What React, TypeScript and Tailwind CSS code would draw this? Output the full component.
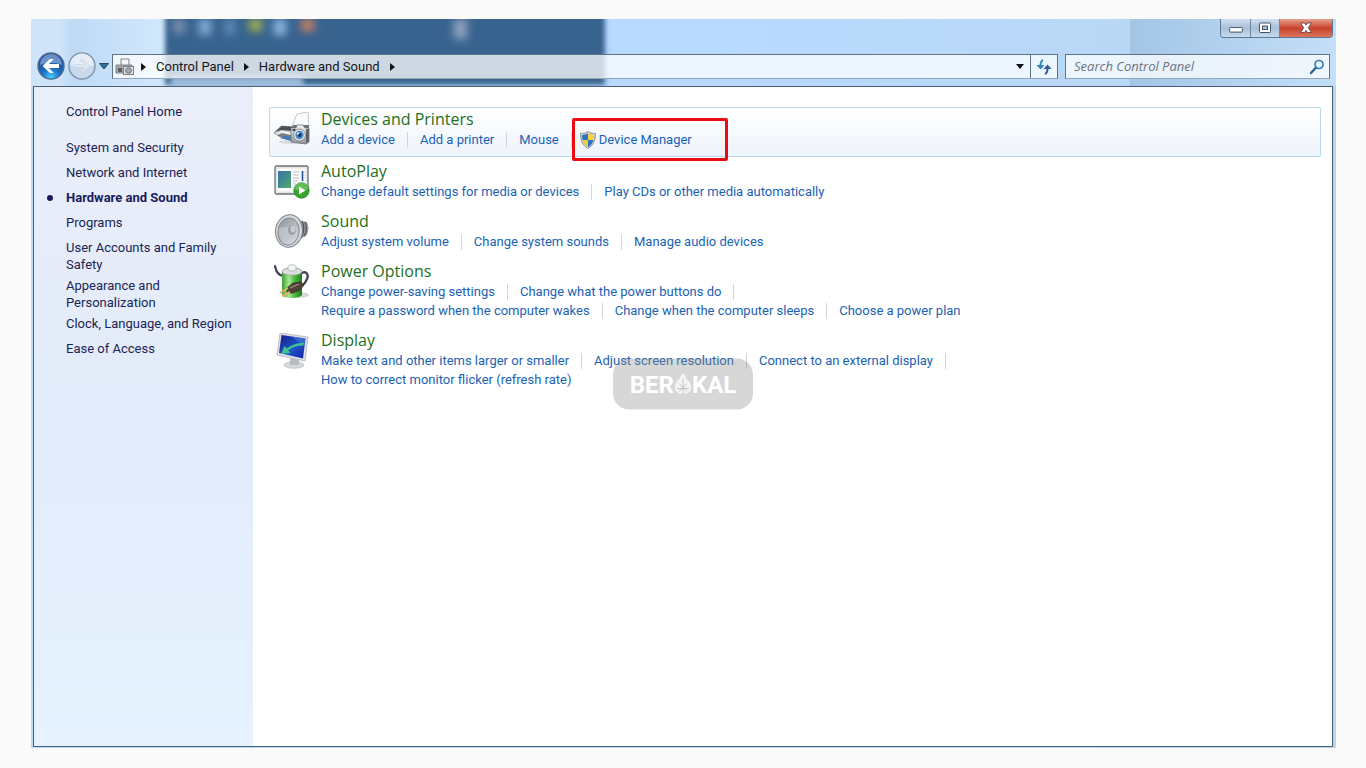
import { Fragment, type ReactNode } from 'react';

const sidebarItems = [
  'System and Security',
  'Network and Internet',
  'Hardware and Sound',
  'Programs',
  'User Accounts and Family Safety',
  'Appearance and Personalization',
  'Clock, Language, and Region',
  'Ease of Access',
];

type Task = { label: string; shield?: boolean };

type Category = {
  title: string;
  icon: ReactNode;
  rows: Task[][];
  active?: boolean;
};

function PrinterIcon() {
  return (
    <svg viewBox="0 0 36 36" className="h-9 w-9" aria-hidden="true">
      <defs>
        <linearGradient id="camera" x1="0" y1="0" x2="0" y2="1">
          <stop offset="0" stopColor="#f4f5f6" />
          <stop offset="1" stopColor="#8d9299" />
        </linearGradient>
      </defs>
      <ellipse cx="20" cy="30" rx="15" ry="2" fill="#d9dde2" />
      <path d="M18 14 23 2l11-2 1 14z" fill="#fbfbfb" stroke="#b4b9bf" strokeWidth=".8" />
      <path d="M19 13 35 13 35 18 18 17z" fill="#6d7278" />
      <path d="M0 21 7 14l12 1v14L8 26z" fill="#c3c7cb" stroke="#777" strokeWidth=".7" />
      <path d="M1 20 8 14l11 1v4L7 18z" fill="#4a4e54" />
      <path d="M1 22 8 19l10 2v3L7 23z" fill="#f4f7fa" />
      <path d="m3 23 5-2 9 2v2L7 25z" fill="#787d83" />
      <path d="m6 26 5-2 7 1v4z" fill="#3d79bd" />
      <path d="M17 16h5l1-3h6l2 3h4v14l-3 2-15-2z" fill="url(#camera)" stroke="#6c7178" strokeWidth=".8" />
      <path d="M32 17h3v12l-3 2z" fill="#60656b" />
      <rect x="18.500" y="17" width="3" height="2" fill="#444" />
      <circle cx="25.500" cy="23" r="6" fill="#e3e6e9" stroke="#797e85" strokeWidth=".8" />
      <circle cx="25.500" cy="23" r="4.200" fill="#4d8aca" />
      <circle cx="25.500" cy="23" r="2" fill="#123562" />
      <circle cx="24" cy="21.500" r="1.200" fill="#c9e4fb" />
    </svg>
  );
}

function AutoPlayIcon() {
  return (
    <svg viewBox="0 0 36 36" className="h-9 w-9" aria-hidden="true">
      <defs>
        <linearGradient id="photo" x1="0" y1="0" x2="1" y2="1">
          <stop offset="0" stopColor="#3b6fb0" />
          <stop offset=".5" stopColor="#3f8f8b" />
          <stop offset="1" stopColor="#5aa86c" />
        </linearGradient>
      </defs>
      <rect x="1" y="2" width="33" height="28" rx="1.500" fill="#eef0f1" stroke="#6d7276" strokeWidth="1.300" />
      <rect x="3" y="4" width="29" height="24" fill="#fdfdfd" stroke="#ccd0d3" strokeWidth=".6" />
      <rect x="4" y="7" width="13" height="17" fill="url(#photo)" />
      <path d="M19 8h6M19 11h6M19 14h6M19 17h5M19 20h3" stroke="#b9bec4" strokeWidth="1" />
      <path d="M27 8h4M27 11h4M27 14h4" stroke="#c7ccd2" strokeWidth="1" />
      <path d="M28.500 7v10" stroke="#2f56a0" strokeWidth="1.600" />
      <circle cx="27.500" cy="26.500" r="7.700" fill="#35a52e" stroke="#1f7d1b" strokeWidth=".7" />
      <path d="M20.500 25a7 7 0 0 1 14 0c-4 2-10 2-14 0z" fill="#7fd26f" opacity=".6" />
      <path d="m25 22.500 6.500 4-6.500 4z" fill="#fff" />
    </svg>
  );
}

function SoundIcon() {
  return (
    <svg viewBox="0 0 36 36" className="h-9 w-9" aria-hidden="true">
      <defs>
        <linearGradient id="cone" x1="0" y1="0" x2="1" y2="1">
          <stop offset="0" stopColor="#8c9299" />
          <stop offset="1" stopColor="#dfe3e7" />
        </linearGradient>
      </defs>
      <path d="M18 2c5 0 7 4 10 5l5 1c2 4 2 11-1 14l-6 3-9 7z" fill="#9da2a7" />
      <path d="M28 7c3 5 2 12-1 17M31 8c2 4 2 10-1 14" stroke="#555a5f" strokeWidth="1.400" fill="none" />
      <ellipse cx="15" cy="17" rx="13.500" ry="16.300" fill="#d5d8db" stroke="#7f8489" strokeWidth="1" transform="rotate(8 15 17)" />
      <ellipse cx="14.500" cy="17.500" rx="10.500" ry="13.500" fill="url(#cone)" stroke="#878c92" strokeWidth="1" transform="rotate(8 14.500 17.500)" />
      <path d="M5 14 18 12v7l-7 9c-4-2-7-7-6-14z" fill="#c3c8ce" opacity=".7" />
      <ellipse cx="18" cy="16" rx="4" ry="5" fill="#9aa0a7" />
      <ellipse cx="19" cy="15" rx="2.500" ry="3.500" fill="#c8ccd1" />
    </svg>
  );
}

function PowerIcon() {
  return (
    <svg viewBox="0 0 36 36" className="h-9 w-9" aria-hidden="true">
      <defs>
        <linearGradient id="cell" x1="0" y1="0" x2="1" y2="0">
          <stop offset="0" stopColor="#3f9c34" />
          <stop offset=".35" stopColor="#a3ec90" />
          <stop offset=".65" stopColor="#46b83b" />
          <stop offset="1" stopColor="#1f7a1c" />
        </linearGradient>
      </defs>
      <ellipse cx="25" cy="31" rx="10" ry="3" fill="#d5dad3" />
      <path d="M1 2c1 6 3 9 8 10" fill="none" stroke="#494156" strokeWidth="2.200" strokeLinecap="round" />
      <path d="M26 10c6-4 9 0 7 5-2 4-3 6-8 8" fill="none" stroke="#494156" strokeWidth="2.400" />
      <path d="M8 8h20v23c-3 4-17 4-20 0z" fill="url(#cell)" />
      <ellipse cx="18" cy="7.500" rx="10" ry="3.800" fill="#d9dfdc" stroke="#8e9792" strokeWidth=".7" />
      <path d="M14 2.500c0-2.500 8-2.500 8 0V6c-2 1.500-6 1.500-8 0z" fill="#edf1ef" stroke="#9ba39f" strokeWidth=".6" />
      <path d="M13 24 19 19l8-1 3 3-4 5-7 3-6 0z" fill="#4f4038" stroke="#2c231f" strokeWidth=".6" />
      <path d="m6 29 8-5M8 32l8-4" stroke="#e2b26d" strokeWidth="2" />
      <path d="m16 24 9-4" stroke="#a39389" strokeWidth="1.200" />
    </svg>
  );
}

function DisplayIcon() {
  return (
    <svg viewBox="0 0 36 36" className="h-9 w-9" aria-hidden="true">
      <defs>
        <linearGradient id="screen" x1="0" y1="0" x2="1" y2="1">
          <stop offset="0" stopColor="#171b85" />
          <stop offset=".55" stopColor="#1f52c9" />
          <stop offset="1" stopColor="#1422a0" />
        </linearGradient>
      </defs>
      <ellipse cx="20" cy="32" rx="10" ry="3.300" fill="#d7d9dc" stroke="#b0b3b7" strokeWidth=".6" />
      <path d="m16 25 9 2v5h-9z" fill="#b9bcc0" />
      <path d="m6 0 28 4-3 24L3 22z" fill="#dfe1e5" stroke="#a6a9ae" strokeWidth=".7" />
      <path d="m7.500 2 24 3.500-2.500 20L5 20z" fill="url(#screen)" />
      <path d="m18 3.500 13.500 2-.7 6C25 9 21 7 18 3.500z" fill="#4a7be0" opacity=".6" />
      <path d="M30 10c-7 0-13 2-17 5.500L10.500 13 7 21l9.500-1-2.300-2.500C18 14 23 12.500 29.500 12.500z" fill="#45d889" opacity=".85" />
    </svg>
  );
}

function ShieldIcon() {
  return (
    <svg viewBox="0 0 16 18" className="h-[18px] w-4 shrink-0" aria-hidden="true">
      <path d="M8 .5c2 1.300 4.500 2 7.500 2C15.500 9.500 14 14 8 17.500 2 14 .5 9.500.5 2.500c3 0 5.500-.7 7.500-2z" fill="#c8ccd0" stroke="#7b8188" strokeWidth=".7" />
      <path d="M8 2.500v6.500H2.600C2.200 7.500 2.100 6 2.100 4 4.300 3.900 6.300 3.400 8 2.500z" fill="#2d74c4" />
      <path d="M8 2.500v6.500h5.400c.4-1.500.5-3 .5-5-2.200-.1-4.200-.6-5.900-1.500z" fill="#f3d33c" />
      <path d="M8 9H2.600C3.300 12 5 14.400 8 16.200z" fill="#f0cc35" />
      <path d="M8 9h5.400c-.7 3-2.400 5.400-5.400 7.200z" fill="#2d74c4" />
    </svg>
  );
}

const categories: Category[] = [
  {
    title: 'Devices and Printers',
    icon: <PrinterIcon />,
    active: true,
    rows: [
      [
        { label: 'Add a device' },
        { label: 'Add a printer' },
        { label: 'Mouse' },
        { label: 'Device Manager', shield: true },
      ],
    ],
  },
  {
    title: 'AutoPlay',
    icon: <AutoPlayIcon />,
    rows: [
      [
        { label: 'Change default settings for media or devices' },
        { label: 'Play CDs or other media automatically' },
      ],
    ],
  },
  {
    title: 'Sound',
    icon: <SoundIcon />,
    rows: [
      [
        { label: 'Adjust system volume' },
        { label: 'Change system sounds' },
        { label: 'Manage audio devices' },
      ],
    ],
  },
  {
    title: 'Power Options',
    icon: <PowerIcon />,
    rows: [
      [{ label: 'Change power-saving settings' }, { label: 'Change what the power buttons do' }],
      [
        { label: 'Require a password when the computer wakes' },
        { label: 'Change when the computer sleeps' },
        { label: 'Choose a power plan' },
      ],
    ],
  },
  {
    title: 'Display',
    icon: <DisplayIcon />,
    rows: [
      [
        { label: 'Make text and other items larger or smaller' },
        { label: 'Adjust screen resolution' },
        { label: 'Connect to an external display' },
      ],
      [{ label: 'How to correct monitor flicker (refresh rate)' }],
    ],
  },
];

function Separator() {
  return <span className="h-4 w-px shrink-0 bg-[#cfd6de]" />;
}

function TaskLink({ task }: { task: Task }) {
  if (task.shield) {
    return (
      <a href="#" className="relative -ml-1 flex items-center gap-[3px] hover:underline">
        <ShieldIcon />
        {task.label}
        <span className="pointer-events-none absolute -inset-y-3 -right-9 -left-2 rounded-xs border-3 border-[#ea0c12]" />
      </a>
    );
  }
  return (
    <a href="#" className="hover:underline">
      {task.label}
    </a>
  );
}

function CategoryRow({ category }: { category: Category }) {
  return (
    <section
      className={
        category.active
          ? 'mb-0.5 flex gap-[11px] rounded-xs border border-[#b9d9ec] bg-linear-to-b from-white to-[#eef4fc] pb-[7px] pl-1'
          : 'flex gap-[11px] border border-transparent pb-[7px] pl-1'
      }
    >
      <div className="h-9 w-9 shrink-0 pt-1">{category.icon}</div>
      <div>
        <h2 className="font-['Open_Sans',sans-serif] text-base leading-[22px] text-[#1c701c]">
          <a href="#">{category.title}</a>
        </h2>
        {category.rows.map((row, i) => (
          <div key={i} className="flex h-[19px] items-center gap-3 whitespace-nowrap text-[#1a62b4]">
            {row.map((task, j) => (
              <Fragment key={task.label}>
                {j > 0 && <Separator />}
                <TaskLink task={task} />
              </Fragment>
            ))}
            {i < category.rows.length - 1 && <Separator />}
          </div>
        ))}
      </div>
    </section>
  );
}

function GlassBackdrop() {
  return (
    <svg className="absolute inset-0 h-full w-full" aria-hidden="true">
      <defs>
        <linearGradient id="glassLeft">
          <stop offset="0" stopColor="#cfe4f8" />
          <stop offset=".2" stopColor="#cfe4f8" />
          <stop offset=".3" stopColor="#bfdaf6" />
          <stop offset="1" stopColor="#d3e9fd" />
        </linearGradient>
        <filter id="soft" x="-20%" y="-50%" width="140%" height="200%">
          <feGaussianBlur stdDeviation="2.500" />
        </filter>
        <filter id="softer" x="-100%" y="-100%" width="300%" height="300%">
          <feGaussianBlur stdDeviation="4" />
        </filter>
      </defs>
      <rect width="140" height="67" fill="url(#glassLeft)" />
      <rect x="134" y="-10" width="440" height="76" fill="#39648f" filter="url(#soft)" />
      <rect x="140" y="58" width="132" height="14" fill="#9dbbdc" filter="url(#soft)" />
      <g filter="url(#softer)">
        <rect x="142" y="0" width="12" height="14" fill="#7d8fae" />
        <rect x="168" y="0" width="12" height="16" fill="#84aed6" />
        <rect x="194" y="0" width="10" height="16" fill="#5f8cba" />
        <rect x="218" y="0" width="13" height="12" fill="#a3b24b" />
        <rect x="243" y="0" width="12" height="16" fill="#90b7e0" />
        <rect x="270" y="0" width="13" height="12" fill="#cf8160" />
        <rect x="423" y="0" width="13" height="20" fill="#92a3c0" />
      </g>
    </svg>
  );
}

function TitleButtons() {
  return (
    <div className="flex h-[19px] overflow-hidden rounded-b-sm border border-t-0 border-[#5f7895]">
      <button aria-label="Minimize" className="flex w-[30px] items-center justify-center border-r border-[#6d849f] bg-linear-to-b from-[#cfdfef] via-[#a8bfd8] to-[#c6dbf0]">
        <svg viewBox="0 0 14 6" className="mt-1 h-1.5 w-3.5">
          <rect x=".6" y=".6" width="12.800" height="4.500" rx=".8" fill="#fff" stroke="#475569" strokeWidth="1" />
        </svg>
      </button>
      <button aria-label="Maximize" className="flex w-[29px] items-center justify-center border-r border-[#6d849f] bg-linear-to-b from-[#cfdfef] via-[#a8bfd8] to-[#c6dbf0]">
        <svg viewBox="0 0 14 12" className="h-3 w-3.5">
          <rect x="1.500" y="1" width="11" height="9.500" rx=".8" fill="#fff" stroke="#475569" />
          <rect x="4.500" y="4" width="5" height="3.500" fill="#a8bfd8" stroke="#475569" />
        </svg>
      </button>
      <button aria-label="Close" className="flex w-[52px] items-center justify-center bg-linear-to-b from-[#e6a18f] via-[#c8402c] to-[#d9745a]">
        <svg viewBox="0 0 14 12" className="h-3 w-3.5">
          <path d="M1.500 1h4L7 3l1.500-2h4L9.300 5.700l3.200 4.800h-4L7 8.400l-1.500 2.100h-4l3.200-4.800z" fill="#fff" stroke="#5d3437" strokeWidth=".8" />
        </svg>
      </button>
    </div>
  );
}

function NavButtons() {
  return (
    <div className="flex items-center">
      <button aria-label="Back" className="h-7 w-7">
        <svg viewBox="0 0 28 28" className="h-7 w-7">
          <defs>
            <radialGradient id="orb" cx=".5" cy=".95" r=".9">
              <stop offset="0" stopColor="#46d2ff" />
              <stop offset=".4" stopColor="#1d70c4" />
              <stop offset="1" stopColor="#1b4287" />
            </radialGradient>
          </defs>
          <circle cx="14" cy="14" r="13" fill="url(#orb)" stroke="#4d6c96" strokeWidth="1.400" />
          <path d="M3 13a11 11 0 0 1 22 0c-7-3-15-3-22 0z" fill="#a8c8ec" opacity=".55" />
          <path d="m5.500 14 7.500-7h3.800l-4.800 5H22v4H12l4.800 5H13z" fill="#fff" />
        </svg>
      </button>
      <button aria-label="Forward" className="ml-[3px] h-7 w-7">
        <svg viewBox="0 0 28 28" className="h-7 w-7">
          <circle cx="14" cy="14" r="13" fill="#c9d9ec" stroke="#7c90ab" strokeWidth="1.300" />
          <path d="M2.500 13a11.500 11.500 0 0 1 23 0c-7 3-16 3-23 0z" fill="#e5edf7" />
          <path d="m22.500 14-7.500-6h-3l4.500 4.500H6v3h10.500L12 20h3z" fill="#dde7f3" stroke="#c3d1e2" strokeWidth=".6" />
        </svg>
      </button>
      <button aria-label="Recent pages" className="ml-0.5 w-3">
        <svg viewBox="0 0 12 8" className="h-2 w-3">
          <path d="M1.500 1.500h9L6.500 6.500h-1z" fill="#2b7391" stroke="#17405c" strokeWidth=".9" />
        </svg>
      </button>
    </div>
  );
}

function BarIcon() {
  return (
    <svg viewBox="0 0 20 20" className="h-5 w-5" aria-hidden="true">
      <path d="M6 8V2h8v6" fill="#f6f7f8" stroke="#7d8288" />
      <path d="M1 8h16v8H1z" fill="#a3a8ad" stroke="#7d8288" />
      <path d="M3 11h4v4H3z" fill="#5d6166" />
      <rect x="8.500" y="9.500" width="10" height="8" fill="#dadde0" stroke="#7d8288" />
      <circle cx="13.500" cy="13.500" r="2.800" fill="#a5abb1" stroke="#6d7277" />
    </svg>
  );
}

function Chevron() {
  return (
    <svg viewBox="0 0 5 8" className="h-2 w-[5px]" aria-hidden="true">
      <path d="M0 0v8l5-4z" fill="#10131c" />
    </svg>
  );
}

function AddressBar() {
  return (
    <div className="flex h-[25px] flex-1 border border-[#5e7387] border-b-[#93a8bd] bg-white/75">
      <nav aria-label="Address" className="flex flex-1 items-center gap-2.5 pl-0.5 text-[#15161c]">
        <BarIcon />
        <span className="-ml-1">
          <Chevron />
        </span>
        <a href="#">Control Panel</a>
        <Chevron />
        <a href="#">Hardware and Sound</a>
        <Chevron />
      </nav>
      <button aria-label="Previous locations" className="flex w-[21px] items-center justify-center">
        <svg viewBox="0 0 8 5" className="h-[5px] w-2">
          <path d="M0 0h8L4 5z" fill="#10131c" />
        </svg>
      </button>
      <button aria-label="Refresh" className="flex w-[27px] items-center justify-center border-l border-[#5e7387]">
        <svg viewBox="0 0 16 16" className="h-4 w-4">
          <path d="M7 1C4.800 2 4.500 4 4.500 7" fill="none" stroke="#2f93b8" strokeWidth="2" />
          <path d="M.5 6h8l-4 4.500z" fill="#2f86b4" />
          <path d="M9 15c2.500-1 2.500-3 2.500-6" fill="none" stroke="#2b5f9c" strokeWidth="2" />
          <path d="M7.500 10h8l-4-4.500z" fill="#2b5f9c" />
        </svg>
      </button>
    </div>
  );
}

function SearchBox() {
  return (
    <form className="flex h-[25px] w-[265px] items-center border border-[#5e7387] border-b-[#93a8bd] bg-white/75 pr-1 pl-2">
      <input
        type="search"
        aria-label="Search Control Panel"
        placeholder="Search Control Panel"
        className="min-w-0 flex-1 bg-transparent font-['Open_Sans',sans-serif] italic outline-none placeholder:text-[#6c747e]"
      />
      <button type="button" aria-label="Search">
        <svg viewBox="0 0 16 16" className="h-4 w-4">
          <path d="m2 14 5-5.500" stroke="#2d5f95" strokeWidth="2.400" strokeLinecap="round" />
          <circle cx="10" cy="5.500" r="4" fill="#e9f5ff" stroke="#347bb4" strokeWidth="1.700" />
        </svg>
      </button>
    </form>
  );
}

function Sidebar() {
  return (
    <aside className="w-[219px] shrink-0 bg-linear-to-b from-[#eaeef9] via-[#e2ebfa] to-[#e6f2ff] pt-4 pl-8 leading-[17px] text-[#1a2455]">
      <a href="#" className="mb-[19px] block">
        Control Panel Home
      </a>
      <ul>
        {sidebarItems.map((item) => (
          <li key={item} className="relative min-h-[25px] pr-4 pb-1">
            {item === 'Hardware and Sound' ? (
              <>
                <span className="absolute top-1.5 -left-[19px] h-1.5 w-1.5 rounded-full bg-[#191c5c]" />
                <a href="#" aria-current="page" className="font-bold text-[#191c5c]">
                  {item}
                </a>
              </>
            ) : (
              <a href="#">{item}</a>
            )}
          </li>
        ))}
      </ul>
    </aside>
  );
}

function Watermark() {
  return (
    <div className="pointer-events-none absolute top-1/2 left-1/2 flex h-[51px] w-[140px] -translate-1/2 items-center justify-center rounded-2xl bg-[#8c8c8c]/35 text-2xl font-bold text-white">
      BER
      <svg viewBox="0 0 18 22" className="h-[22px] w-[18px]" aria-hidden="true">
        <path d="M9 0c2 2 3 3 3 5 3 2 5 5 5 9 0 3-2 5-4 6H5c-2-1-4-3-4-6 0-4 2-7 5-9 0-2 1-3 3-5z" fill="#fff" opacity=".75" />
        <path d="m5 10 8 8m0-8-8 8M9 5v15M3 15h12" stroke="#c4c4c4" strokeWidth="1" />
      </svg>
      KAL
    </div>
  );
}

export default function App() {
  return (
    <div className="relative flex min-h-screen flex-col bg-[#fafafa] pt-[19px] pr-[30px] pb-5 pl-[31px] font-['Roboto','Open_Sans',sans-serif] text-[13px]">
      <div className="relative flex flex-1 flex-col bg-linear-to-r from-[#b8daff] via-[#b8daff] to-[#b9d6f0] pr-[3px] pb-px pl-0.5">
        <div className="absolute inset-x-0 top-0 h-[67px] overflow-hidden">
          <GlassBackdrop />
          <div className="absolute inset-y-0 right-0 w-[206px] bg-linear-to-r from-[#a3c5e6] to-[#c4dff8]" />
        </div>
        <header className="relative">
          <div className="flex h-[35px] justify-end">
            <TitleButtons />
          </div>
          <div className="flex h-8 items-start pr-[3px] pl-1">
            <div className="-mt-0.5">
              <NavButtons />
            </div>
            <div className="ml-0.5 flex flex-1 gap-[7px]">
              <AddressBar />
              <SearchBox />
            </div>
          </div>
        </header>
        <div className="relative flex flex-1 border border-[#4d5f73] bg-white">
          <Sidebar />
          <main className="flex-1 pt-5 pr-[11px] pl-4">
            {categories.map((category) => (
              <CategoryRow key={category.title} category={category} />
            ))}
          </main>
        </div>
      </div>
      <Watermark />
    </div>
  );
}
